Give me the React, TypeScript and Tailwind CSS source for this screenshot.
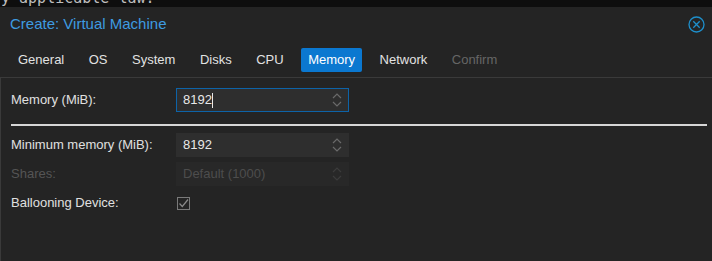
import React from "react";

const Spin = ({ dim }: { dim?: boolean }) => (
  <svg width="12" height="16" viewBox="0 0 12 16" className="shrink-0">
    <path d="M2 6 L6 2 L10 6" fill="none" stroke={dim ? "#3c3c3c" : "#6a6a6a"} strokeWidth="1.2" />
    <path d="M2 10 L6 14 L10 10" fill="none" stroke={dim ? "#3c3c3c" : "#6a6a6a"} strokeWidth="1.2" />
  </svg>
);

export default function App() {
  const tabs = ["General", "OS", "System", "Disks", "CPU", "Memory", "Network", "Confirm"];
  return (
    <div className="w-[712px] h-[261px] bg-[#242424] overflow-hidden text-[13px]" style={{ fontFamily: '"Liberation Sans", Arial, sans-serif' }}>
      <div className="h-[7px] bg-[#0e0e0e] overflow-hidden">
        <div className="mt-[-11px] pl-[1px] text-[15px] leading-[18px] text-[#bdbdbd] whitespace-pre" style={{ fontFamily: '"DejaVu Sans Mono", monospace' }}>
          y applicable law.
        </div>
      </div>
      <div className="h-[33px] flex items-center justify-between pl-[10px] pr-[7px] pt-[1px]">
        <span className="text-[15px] text-[#3e9be0]">Create: Virtual Machine</span>
        <svg width="17" height="17" viewBox="0 0 17 17">
          <circle cx="8.5" cy="8.5" r="7.5" fill="none" stroke="#1e8fcb" strokeWidth="1.3" />
          <path d="M5.3 5.3 L11.7 11.7 M11.7 5.3 L5.3 11.7" stroke="#1e8fcb" strokeWidth="1.3" />
        </svg>
      </div>
      <div className="h-[38px] flex items-start pt-[8px] pl-[11px] gap-[10.5px] border-b border-[#3a3a3a]">
        {tabs.map((t) => (
          <div
            key={t}
            className={
              "h-[24px] px-[7px] flex items-center rounded-[2px] " +
              (t === "Memory" ? "bg-[#0b78d0] text-white" : t === "Confirm" ? "text-[#666666]" : "text-[#e2e2e2]")
            }
          >
            {t}
          </div>
        ))}
      </div>
      <div className="h-[200px] border-l border-[#3a3a3a] pt-[10px] pl-[10px] pr-[4px]">
        <div className="flex items-center h-[24px]">
          <div className="w-[165px] text-[#e0e0e0]">Memory (MiB):</div>
          <div className="w-[173px] h-[24px] bg-[#2e2e2e] border border-[#0d63a8] flex items-center justify-between pl-[6px] pr-[5px] text-[#e8e8e8]">
            <span className="flex items-center">
              8192<span className="inline-block w-[1px] h-[15px] bg-[#e8e8e8]" />
            </span>
            <Spin />
          </div>
        </div>
        <div className="mt-[12px] h-[2px] bg-[#d6d6d6] w-[696px]" />
        <div className="mt-[7px] flex flex-col gap-[5px]">
          <div className="flex items-center h-[24px]">
            <div className="w-[165px] text-[#e0e0e0]">Minimum memory (MiB):</div>
            <div className="w-[173px] h-[24px] bg-[#2e2e2e] flex items-center justify-between pl-[7px] pr-[6px] text-[#e8e8e8]">
              <span>8192</span>
              <Spin />
            </div>
          </div>
          <div className="flex items-center h-[24px]">
            <div className="w-[165px] text-[#555555]">Shares:</div>
            <div className="w-[173px] h-[24px] bg-[#282828] flex items-center justify-between pl-[7px] pr-[6px] text-[#4d4d4d]">
              <span>Default (1000)</span>
              <Spin dim />
            </div>
          </div>
          <div className="flex items-center h-[24px]">
            <div className="w-[165px] text-[#e0e0e0]">Ballooning Device:</div>
            <div className="ml-[1px] w-[13px] h-[13px] border border-[#7a7a7a] flex items-center justify-center">
              <svg width="11" height="11" viewBox="0 0 11 11">
                <path d="M1.5 5.5 L4.3 8.5 L10 1.5" fill="none" stroke="#8a8a8a" strokeWidth="1.2" />
              </svg>
            </div>
          </div>
        </div>
      </div>
    </div>
  );
}
